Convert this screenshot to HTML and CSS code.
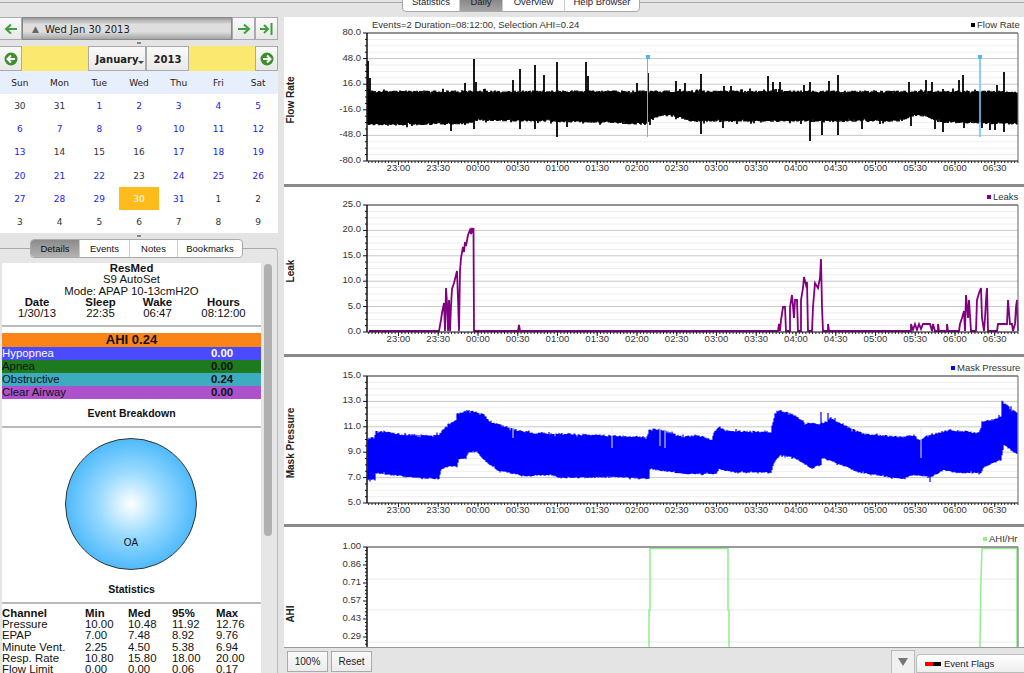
FILE: index.html
```html
<!DOCTYPE html>
<html lang="en">
<head>
  <meta charset="UTF-8">
  <meta name="viewport" content="width=device-width, initial-scale=1.0">
  <title>SleepyHead</title>
  <link rel="stylesheet" href="styles.css">
</head>
<body>
  <div class="top-bar">
    <div class="top-tabs">
      <div class="top-tab tab-stats">Statistics</div>
      <div class="top-tab tab-daily active">Daily</div>
      <div class="top-tab tab-overview">Overview</div>
      <div class="top-tab tab-help">Help Browser</div>
    </div>
  </div>

  <div class="main">
    <div class="sidebar">
      <div class="date-bar">
        <div class="tool-btn btn-back">
          <svg width="14" height="12" viewBox="0 0 14 12"><path d="M13 6H3M7 1.500 2 6l5 4.500" fill="none" stroke="#3f9e3f" stroke-width="2"/></svg>
        </div>
        <div class="date-title"><span class="date-tri">&#9650;</span>Wed Jan 30 2013</div>
        <div class="tool-btn btn-next">
          <svg width="14" height="12" viewBox="0 0 14 12"><path d="M1 6h10M7 1.500 12 6l-5 4.500" fill="none" stroke="#3f9e3f" stroke-width="2"/></svg>
        </div>
        <div class="tool-btn btn-last">
          <svg width="14" height="12" viewBox="0 0 14 12"><path d="M0 6h7M4 2l4 4-4 4" fill="none" stroke="#3f9e3f" stroke-width="2"/><path d="M11.500 0v12" stroke="#3f9e3f" stroke-width="2"/></svg>
        </div>
      </div>
      <div class="grip-row"><span class="grip"></span></div>

      <div class="cal-nav">
        <div class="tool-btn nav-prev">
          <svg width="14" height="14" viewBox="0 0 14 14"><circle cx="7" cy="7" r="6.500" fill="#3c8f2c"/><path d="M11 7H4M7 3.500 3.500 7 7 10.500" fill="none" stroke="#fff" stroke-width="2"/></svg>
        </div>
        <div class="cal-fill"></div>
        <div class="month-btn">January<span class="month-caret"></span></div>
        <div class="year-btn">2013</div>
        <div class="cal-fill"></div>
        <div class="tool-btn nav-next">
          <svg width="14" height="14" viewBox="0 0 14 14"><circle cx="7" cy="7" r="6.500" fill="#3c8f2c"/><path d="M3 7h7M7 3.500 10.500 7 7 10.500" fill="none" stroke="#fff" stroke-width="2"/></svg>
        </div>
      </div>

      <div class="cal-head">
        <span>Sun</span><span>Mon</span><span>Tue</span><span>Wed</span><span>Thu</span><span>Fri</span><span>Sat</span>
      </div>
      <div class="cal-grid">
        <span>30</span><span>31</span><span class="has-data">1</span><span class="has-data">2</span><span class="has-data">3</span><span class="has-data">4</span><span class="has-data">5</span>
        <span class="has-data">6</span><span class="has-data">7</span><span class="has-data">8</span><span class="has-data">9</span><span class="has-data">10</span><span class="has-data">11</span><span class="has-data">12</span>
        <span class="has-data">13</span><span>14</span><span>15</span><span>16</span><span class="has-data">17</span><span class="has-data">18</span><span class="has-data">19</span>
        <span class="has-data">20</span><span class="has-data">21</span><span class="has-data">22</span><span>23</span><span class="has-data">24</span><span class="has-data">25</span><span class="has-data">26</span>
        <span class="has-data">27</span><span class="has-data">28</span><span class="has-data">29</span><span class="selected">30</span><span class="has-data">31</span><span>1</span><span>2</span>
        <span>3</span><span>4</span><span>5</span><span>6</span><span>7</span><span>8</span><span>9</span>
      </div>
      <div class="grip-row"><span class="grip"></span></div>

      <div class="side-tabs">
        <div class="side-tab tab-details active">Details</div>
        <div class="side-tab tab-events">Events</div>
        <div class="side-tab tab-notes">Notes</div>
        <div class="side-tab tab-bookmarks">Bookmarks</div>
      </div>

      <div class="panel">
        <div class="details">
          <div class="center bold">ResMed</div>
          <div class="center">S9 AutoSet</div>
          <div class="center">Mode: APAP 10-13cmH2O</div>
          <div class="session">
            <div class="bold">Date</div><div class="bold">Sleep</div><div class="bold">Wake</div><div class="bold">Hours</div>
            <div>1/30/13</div><div>22:35</div><div>06:47</div><div>08:12:00</div>
          </div>
          <hr class="rule rule-session">
          <div class="ahi-total">AHI 0.24</div>
          <div class="ahi-row hypopnea"><span>Hypopnea</span><b>0.00</b></div>
          <div class="ahi-row apnea"><span>Apnea</span><b>0.00</b></div>
          <div class="ahi-row obstructive"><span>Obstructive</span><b>0.24</b></div>
          <div class="ahi-row clear"><span>Clear Airway</span><b>0.00</b></div>
          <div class="center bold section-title breakdown">Event Breakdown</div>
          <hr class="rule">
          <div class="pie"><span>OA</span></div>
          <div class="center bold section-title statistics">Statistics</div>
          <hr class="rule">
          <div class="stats">
            <b>Channel</b><b>Min</b><b>Med</b><b>95%</b><b>Max</b>
            <span>Pressure</span><span>10.00</span><span>10.48</span><span>11.92</span><span>12.76</span>
            <span>EPAP</span><span>7.00</span><span>7.48</span><span>8.92</span><span>9.76</span>
            <span>Minute Vent.</span><span>2.25</span><span>4.50</span><span>5.38</span><span>6.94</span>
            <span>Resp. Rate</span><span>10.80</span><span>15.80</span><span>18.00</span><span>20.00</span>
            <span>Flow Limit</span><span>0.00</span><span>0.00</span><span>0.06</span><span>0.17</span>
          </div>
        </div>
        <div class="scrollbar"><div class="scroll-thumb"></div></div>
      </div>
    </div>

    <div class="content">
      <div class="graphs">
        <div class="graph" id="flow"></div>
        <div class="graph" id="leak"></div>
        <div class="graph" id="pressure"></div>
        <div class="graph last" id="ahi"></div>
      </div>
      <div class="bottom-bar">
        <div class="plain-btn">100%</div>
        <div class="plain-btn">Reset</div>
        <div class="spacer"></div>
        <div class="flags-toggle"><span class="flags-tri"></span></div>
        <div class="flags-combo"><span class="flag-red"></span><span class="flag-black"></span>Event Flags</div>
      </div>
    </div>
  </div>

  <script src="app.js"></script>
</body>
</html>
```

FILE: styles.css
```css
html, body {
  height: 100%;
}

body {
  margin: 0;
  overflow: hidden;
  display: flex;
  flex-direction: column;
  font-family: "Liberation Sans", Arial, sans-serif;
  font-size: 11.400px;
  color: #111;
  background: #e4e4e4;
}

.top-bar {
  height: 17px;
  flex: none;
  overflow: hidden;
  padding-left: 402px;
  background: linear-gradient(#e4e4e4 2px, #a8a8a8 2px, #a8a8a8 3px, #e4e4e4 3px);
}

.top-tabs {
  display: flex;
  width: 238px;
  height: 20px;
  margin-top: -8px;
  background: #fff;
  border: 1px solid #aaa;
  border-radius: 4px;
  box-sizing: border-box;
}

.top-tab {
  text-align: center;
  line-height: 18px;
  font-size: 9.500px;
  color: #223;
  border-right: 1px solid #ccc;
  box-sizing: border-box;
}

.top-tab.active {
  background: linear-gradient(#777, #a5a5a5);
}

.tab-stats { width: 57px; }
.tab-daily { width: 43px; }
.tab-overview { width: 62px; }
.tab-help { flex: 1; border-right: 0; }

.main {
  flex: 1;
  display: flex;
  min-height: 0;
}

.sidebar {
  width: 284px;
  flex: none;
  overflow: hidden;
  background: #e4e4e4;
}

.date-bar {
  display: flex;
  width: 278px;
  height: 23px;
}

.tool-btn {
  display: flex;
  align-items: center;
  justify-content: center;
  width: 23px;
  background: linear-gradient(#fafafa, #e8e8e8);
  border: 1px solid #aaa;
  box-sizing: border-box;
}

.btn-back { margin-left: -1px; }

.date-title {
  flex: 1;
  display: flex;
  align-items: center;
  padding-top: 1px;
  font-family: "DejaVu Sans", sans-serif;
  font-size: 10px;
  color: #222;
  background: linear-gradient(#9a9a9a, #dedede 30%, #dedede 65%, #a5a5a5);
  border: 1px solid #888;
  box-sizing: border-box;
}

.date-tri {
  margin: 0 6px 0 9px;
  font-size: 9px;
  color: #666;
}

.grip-row {
  height: 6px;
  width: 278px;
  display: flex;
  justify-content: center;
  align-items: center;
}

.grip {
  width: 4px;
  height: 2px;
  background: #888;
}

.cal-nav {
  display: flex;
  width: 278px;
  height: 25px;
}

.nav-prev { margin-left: -1px; }

.cal-fill {
  flex: 1;
  background: #fbe96f;
}

.month-btn, .year-btn {
  position: relative;
  display: flex;
  align-items: center;
  justify-content: center;
  height: 25px;
  padding-top: 1px;
  font-family: "DejaVu Sans", sans-serif;
  font-size: 10px;
  font-weight: bold;
  color: #222;
  background: linear-gradient(#fafafa, #e9e9e9);
  border: 1px solid #aaa;
  box-sizing: border-box;
}

.month-btn { width: 58px; }
.year-btn { width: 43px; }

.month-caret {
  position: absolute;
  right: 1px;
  bottom: 6px;
  border-left: 3px solid transparent;
  border-right: 3px solid transparent;
  border-top: 3px solid #444;
}

.cal-head, .cal-grid {
  display: grid;
  grid-template-columns: repeat(7, 1fr);
  width: 278px;
  font-family: "DejaVu Sans", sans-serif;
  font-size: 9px;
  text-align: center;
}

.cal-head {
  height: 23px;
  line-height: 24px;
  background: #e8effc;
  color: #222;
}

.cal-grid {
  grid-auto-rows: 23.200px;
  line-height: 24px;
  background: #fff;
  color: #333;
}

.cal-grid .has-data {
  color: #2222f0;
}

.cal-grid .selected {
  background: #fdbc1c;
  color: #fff;
}

.side-tabs {
  position: relative;
  z-index: 1;
  display: flex;
  width: 213px;
  height: 19px;
  margin-left: 30px;
  margin-bottom: -10px;
  background: #fff;
  border: 1px solid #aaa;
  border-radius: 4px;
  box-sizing: border-box;
  font-size: 9.500px;
  line-height: 17px;
  text-align: center;
}

.side-tab {
  border-right: 1px solid #ccc;
  box-sizing: border-box;
}

.side-tab.active {
  background: linear-gradient(#8a8a8a, #b4b4b4);
  border-radius: 3px 0 0 3px;
}

.tab-details { width: 49px; }
.tab-events { width: 50px; }
.tab-notes { width: 48px; }
.tab-bookmarks { flex: 1; border-right: 0; }

.panel {
  display: flex;
  width: 278px;
  height: 430px;
  padding: 14px 2px 0 2px;
  background: #e6e6e6;
  border-top: 1px solid #aaa;
  border-right: 1px solid #bbb;
  border-radius: 0 4px 0 0;
  box-sizing: border-box;
}

.details {
  width: 259px;
  flex: none;
  background: #fff;
  line-height: 11.200px;
  overflow: hidden;
}

.center { text-align: center; }
.bold { font-weight: bold; }

.session {
  display: grid;
  grid-template-columns: 70px 57px 57px 1fr;
  text-align: center;
}

.rule {
  height: 2px;
  margin: 0;
  border: 0;
  background: #bbb;
}

.rule-session {
  margin-top: 6px;
  margin-bottom: 6px;
}

.ahi-total {
  height: 13.500px;
  line-height: 14px;
  background: #fb8417;
  text-align: center;
  font-size: 13px;
  font-weight: bold;
}

.ahi-row {
  display: flex;
  height: 13px;
  line-height: 13px;
}

.ahi-row span { width: 209px; }
.hypopnea { background: #4a4aff; color: #fff; }
.apnea { background: #1e7a1e; }
.obstructive { background: #3eacc0; }
.clear { background: #ad52cc; }

.section-title {
  font-size: 10.500px;
}

.breakdown {
  margin-top: 9px;
  margin-bottom: 7px;
}

.pie {
  width: 132px;
  height: 132px;
  margin: 10px 0 0 63px;
  display: flex;
  align-items: flex-end;
  justify-content: center;
  background: radial-gradient(circle at 50% 50%, #fff 0, #9adbff 35%, #4db9fb 72%, #38aef5 100%);
  border: 1px solid #333;
  border-radius: 50%;
  box-sizing: border-box;
  font-size: 10px;
}

.pie span {
  margin-bottom: 21px;
}

.statistics {
  margin-top: 14px;
  margin-bottom: 7px;
}

.stats {
  display: grid;
  grid-template-columns: 83px 43px 44px 44px 1fr;
  margin-top: 4px;
}

.scrollbar {
  flex: 1;
  padding: 1px 3px 0 3px;
}

.scroll-thumb {
  width: 8px;
  height: 272px;
  background: #b0b0b0;
  border-radius: 4px;
}

.content {
  flex: 1;
  display: flex;
  flex-direction: column;
  min-width: 0;
}

.graphs {
  flex: 1;
  display: flex;
  flex-direction: column;
  min-height: 0;
  background: #fff;
}

.graph {
  height: 167px;
  flex: none;
  border-bottom: 3px solid #8a8a8a;
}

.graph.last {
  height: 120px;
  border-bottom: 0;
}

.graph svg {
  display: block;
}

.graph text {
  font-family: "Liberation Sans", Arial, sans-serif;
  font-size: 9.500px;
  fill: #333;
}

.graph .axis-title {
  font-size: 10px;
  font-weight: bold;
  fill: #222;
}

.bottom-bar {
  display: flex;
  align-items: flex-end;
  height: 26px;
  flex: none;
  padding-left: 3px;
  gap: 3px;
  background: #e4e4e4;
  border-top: 1px solid #999;
  box-sizing: border-box;
}

.plain-btn {
  width: 41px;
  height: 21px;
  margin-bottom: 1px;
  line-height: 20px;
  text-align: center;
  font-size: 10px;
  color: #222;
  background: linear-gradient(#fafafa, #ececec);
  border: 1px solid #aaa;
  box-sizing: border-box;
}

.spacer { flex: 1; }

.flags-toggle {
  display: flex;
  align-items: center;
  justify-content: center;
  width: 24px;
  height: 23px;
  background: #f0f0f0;
  border: 1px solid #bbb;
  border-bottom: 0;
  box-sizing: border-box;
}

.flags-tri {
  border-left: 5px solid transparent;
  border-right: 5px solid transparent;
  border-top: 8px solid #777;
}

.flags-combo {
  display: flex;
  align-items: center;
  width: 115px;
  height: 19px;
  margin-left: -2px;
  margin-right: -7px;
  padding-left: 8px;
  font-size: 9.500px;
  color: #223;
  background: linear-gradient(#fff, #eee);
  border: 1px solid #bbb;
  border-radius: 4px 0 0 0;
  box-sizing: border-box;
}

.flag-red, .flag-black {
  width: 8px;
  height: 4px;
}

.flag-red { background: #f00; }
.flag-black { background: #000; margin-right: 3px; }
```

FILE: app.js
```js
const NS = 'http://www.w3.org/2000/svg';
const TIMES = ['23:00', '23:30', '00:00', '00:30', '01:00', '01:30', '02:00', '02:30',
  '03:00', '03:30', '04:00', '04:30', '05:00', '05:30', '06:00', '06:30'];
const LEFT = 367;
const RIGHT = 1018;

let seed = 12345;
function rnd() {
  seed = (seed * 16807) % 2147483647;
  return seed / 2147483647;
}

function el(parent, name, attrs, text) {
  const node = document.createElementNS(NS, name);
  for (const key in attrs) node.setAttribute(key, attrs[key]);
  if (text) node.textContent = text;
  parent.appendChild(node);
  return node;
}

function line(svg, x1, y1, x2, y2, color, width) {
  el(svg, 'line', { x1, y1, x2, y2, stroke: color, 'stroke-width': width || 1 });
}

// envelope values between known points
function interp(points, x) {
  for (let i = 1; i < points.length; i++) {
    if (x <= points[i][0]) {
      const a = points[i - 1];
      const b = points[i];
      return a[1] + (b[1] - a[1]) * (x - a[0]) / (b[0] - a[0]);
    }
  }
  return points[points.length - 1][1];
}

// small noise with a few bigger outliers, for the signal edges
function jag(size) {
  const r = rnd();
  if (r < 0.12) return (rnd() - 0.5) * size * 3;
  return (rnd() - 0.5) * size;
}

function frame(id, opts) {
  const svg = el(document.getElementById(id), 'svg', {
    width: 740, height: opts.height,
    viewBox: `284 ${opts.y} 740 ${opts.height}`
  });

  const step = (opts.bottom - opts.top) / (opts.labels.length - 1);
  const bottomEdge = opts.noXAxis ? 647 : opts.bottom;

  // grid
  if (opts.grid) {
    opts.grid.forEach(y => line(svg, LEFT, y, RIGHT, y, '#e8e8e8'));
  } else {
    opts.labels.forEach((label, i) => {
      const y = opts.top + i * step;
      line(svg, LEFT, y, RIGHT, y, '#c8c8c8');
      if (i < opts.labels.length - 1) {
        for (let m = 1; m < 4; m++) {
          line(svg, LEFT, y + m * step / 4, RIGHT, y + m * step / 4, '#eeeeee');
        }
      }
    });
  }

  // y axis labels and ticks
  const minor = opts.minor || 4;
  opts.labels.forEach((label, i) => {
    const y = opts.top + i * step;
    if (y <= bottomEdge) {
      line(svg, LEFT - 4, y, LEFT, y, '#111');
      el(svg, 'text', { x: 361, y: y + 2, 'text-anchor': 'end' }, label);
    }
    for (let m = 1; m < minor; m++) {
      const my = y + m * step / minor;
      if (my < bottomEdge) line(svg, LEFT - 2, my, LEFT, my, '#111');
    }
  });

  // axis title
  el(svg, 'text', {
    class: 'axis-title', 'text-anchor': 'middle',
    transform: `translate(294 ${opts.titleY}) rotate(-90)`
  }, opts.title);

  // legend
  el(svg, 'rect', { x: opts.legendX, y: opts.legendY - 2, width: 4, height: 4, fill: opts.color });
  el(svg, 'text', { x: opts.legendX + 6, y: opts.legendY + 3 }, opts.legend);

  svg.plot = el(svg, 'g', {});

  // plot border
  line(svg, LEFT, opts.top, RIGHT, opts.top, '#777', 1.5);
  line(svg, RIGHT, opts.top, RIGHT, bottomEdge, '#666');
  line(svg, LEFT, opts.top, LEFT, bottomEdge, '#111', 1.5);

  // time axis
  if (!opts.noXAxis) {
    line(svg, LEFT, opts.bottom, RIGHT, opts.bottom, '#222');
    for (let x = 398.5 - 3.3125 * 9; x < RIGHT; x += 3.3125) {
      line(svg, x, opts.bottom, x, opts.bottom + 2, '#222');
    }
    TIMES.forEach((time, i) => {
      const x = 398.5 + i * 39.75;
      line(svg, x, opts.bottom, x, opts.bottom + 4, '#222');
      el(svg, 'text', { x, y: opts.bottom + 10, 'text-anchor': 'middle' }, time);
    });
  }
  return svg;
}

function drawFlow() {
  const svg = frame('flow', {
    y: 17, height: 167, top: 33, bottom: 161,
    labels: ['80.0', '48.0', '16.0', '-16.0', '-48.0', '-80.0'],
    title: 'Flow Rate', titleY: 100, color: '#000',
    legend: 'Flow Rate', legendX: 971, legendY: 25
  });
  el(svg, 'text', { x: 372, y: 28 }, 'Events=2 Duration=08:12:00, Selection AHI=0.24');

  const lower = [[367, 125], [455, 124], [470, 123], [478, 120], [600, 122], [645, 124],
    [652, 118], [662, 115], [675, 116], [690, 121], [900, 121], [915, 115], [925, 116], [940, 122], [1018, 124]];
  let body = '';
  for (let x = 368; x < RIGHT; x += 1) {
    const top = 91.500 + jag(2);
    const bot = interp(lower, x) + jag(2);
    body += `M${x} ${top.toFixed(1)}V${bot.toFixed(1)}`;
  }
  const ups = [[368, 61], [370, 78], [465, 83], [474, 59], [476, 82], [513, 80], [520, 69], [535, 65],
    [544, 75], [557, 62], [586, 62], [588, 76], [637, 83], [648, 73], [676, 81], [685, 83], [701, 74],
    [724, 86], [731, 86], [768, 76], [773, 82], [780, 82], [804, 85], [810, 82], [829, 81], [838, 75],
    [909, 82], [926, 80], [932, 82], [959, 80], [963, 75], [997, 85], [1004, 72]];
  const downs = [[451, 131], [474, 129], [520, 129], [535, 129], [557, 137], [567, 127], [650, 125],
    [701, 134], [723, 128], [810, 141], [822, 135], [838, 135], [862, 129], [911, 126], [935, 129],
    [943, 132], [964, 128], [982, 128], [990, 130], [995, 130], [1004, 132]];
  ups.forEach(s => { body += `M${s[0]} 95V${s[1]}`; });
  downs.forEach(s => { body += `M${s[0]} 110V${s[1]}`; });
  el(svg.plot, 'path', { d: body, stroke: '#000', 'stroke-width': 1.8, fill: 'none' });

  line(svg.plot, 647.5, 57, 647.5, 137, '#5bb8f0');
  el(svg.plot, 'rect', { x: 646, y: 55, width: 4, height: 4, fill: '#4db6f5' });
  line(svg.plot, 980, 57, 980, 137, 'rgba(110,195,250,0.8)', 2);
  el(svg.plot, 'rect', { x: 978, y: 55, width: 4, height: 4, fill: '#4db6f5' });
}

function drawLeak() {
  const svg = frame('leak', {
    y: 187, height: 167, top: 205, bottom: 332,
    labels: ['25.0', '20.0', '15.0', '10.0', '5.0', '0.0'],
    title: 'Leak', titleY: 271, color: '#800080',
    legend: 'Leaks', legendX: 987, legendY: 197
  });
  const pts = [[369, 331], [439, 331], [441, 320], [442, 313], [444, 303], [445, 331], [446, 288],
    [447, 303], [448, 331], [449, 300], [450, 331], [451, 306], [452, 289], [454, 283], [457, 271],
    [458, 299], [459, 331], [460, 271], [461, 258], [463, 247], [464, 252], [465, 242], [466, 246],
    [468, 235], [470, 230], [471, 234], [472, 228], [473, 233], [473.5, 228], [474, 331], [518, 331],
    [519, 325], [520, 331], [778, 331],
    [779, 324], [780, 331], [781, 320], [783, 307], [785, 307], [786, 331], [790, 331], [790, 307],
    [792, 295], [794, 318], [795, 300], [797, 300], [798, 331], [801, 331], [801, 300], [803, 288],
    [804, 277], [806, 285], [807, 282], [808, 331], [812, 331], [813, 307], [815, 283], [818, 288],
    [820, 278], [821, 259], [822, 307], [823, 331], [828, 331], [828, 324], [829, 331], [911, 331],
    [911, 324], [913, 330], [915, 324], [917, 330], [919, 324], [921, 329], [923, 324], [930, 324],
    [932, 331], [933, 324], [935, 331], [938, 331], [938, 324], [939, 331], [947, 331], [947, 324],
    [948, 331], [959, 331], [960, 324], [962, 318], [964, 311], [965, 331], [966, 295], [968, 318],
    [969, 300], [971, 331], [976, 331], [977, 300], [979, 293], [981, 288], [982, 318], [984, 331],
    [985, 318], [986, 300], [987, 288], [988, 331], [997, 331], [998, 324], [1007, 324], [1008, 300],
    [1010, 324], [1012, 324], [1013, 331], [1015, 324], [1016, 307], [1017, 300], [1018, 331]];
  el(svg.plot, 'polyline', {
    points: pts.map(p => p.join(',')).join(' '),
    fill: 'none', stroke: '#800080', 'stroke-width': 1.8
  });
}

function drawPressure() {
  const svg = frame('pressure', {
    y: 357, height: 167, top: 376, bottom: 503,
    labels: ['15.0', '13.0', '11.0', '9.0', '7.0', '5.0'],
    title: 'Mask Pressure', titleY: 443, color: '#0000ff',
    legend: 'Mask Pressure', legendX: 951, legendY: 368
  });
  const upper = [[367, 438], [374, 438], [376, 431], [407, 435], [439, 435], [447, 425], [456, 421],
    [457, 414], [469, 410], [484, 414], [489, 421], [504, 426], [514, 430], [534, 433], [567, 434],
    [647, 437], [649, 430], [654, 428], [684, 437], [697, 435], [712, 440], [714, 432], [719, 427],
    [727, 431], [771, 432], [772, 425], [775, 414], [780, 410], [794, 415], [806, 423], [821, 424],
    [831, 418], [841, 424], [864, 434], [901, 437], [914, 435], [919, 440], [931, 434], [951, 430],
    [979, 433], [982, 422], [991, 420], [1001, 417], [1002, 400], [1009, 407], [1018, 413]];
  const lower = [[367, 480], [375, 480], [376, 473], [407, 477], [439, 479], [441, 470], [449, 466],
    [457, 467], [459, 459], [466, 458], [469, 452], [477, 452], [484, 460], [497, 470], [511, 473],
    [524, 476], [551, 475], [561, 478], [617, 477], [649, 479], [650, 469], [684, 474], [716, 474],
    [719, 469], [737, 473], [756, 472], [771, 473], [774, 463], [780, 455], [794, 458], [811, 468],
    [821, 465], [822, 458], [847, 467], [857, 472], [901, 479], [914, 475], [931, 477], [944, 470],
    [957, 473], [981, 473], [984, 467], [1001, 460], [1004, 445], [1018, 455]];
  let body = '';
  for (let x = 368; x < RIGHT; x += 1) {
    const top = interp(upper, x) + jag(1.8);
    const bot = interp(lower, x) + jag(1.2);
    body += `M${x} ${top.toFixed(1)}V${bot.toFixed(1)}`;
  }
  body += 'M821 430V412M828 430V413M930 470V482';
  el(svg.plot, 'path', { d: body, stroke: '#0000ff', 'stroke-width': 1.2, fill: 'none' });
  // thin notches in the upper edge
  [[513, 438], [612, 448], [660, 446], [665, 448], [921, 458]].forEach(n => {
    line(svg.plot, n[0], 428, n[0], n[1], '#e8e8ff');
  });
}

function drawAhi() {
  const svg = frame('ahi', {
    y: 527, height: 120, top: 547, bottom: 655, noXAxis: true, minor: 5,
    labels: ['1.00', '0.86', '0.71', '0.57', '0.43', '0.29', '0.14'],
    grid: [579, 610, 642],
    title: 'AHI', titleY: 614, color: '#90ee90',
    legend: 'AHI/Hr', legendX: 983, legendY: 539
  });
  const pts = [[649, 647], [649, 610], [650, 610], [650, 548.5], [728, 548.5], [728, 610], [729, 610], [729, 647]];
  const pts2 = [[980, 647], [980.5, 610], [981, 579], [982, 548.5], [1017, 548.5], [1017, 647]];
  [pts, pts2].forEach(p => {
    el(svg.plot, 'polyline', {
      points: p.map(q => q.join(',')).join(' '),
      fill: 'none', stroke: '#90ee90', 'stroke-width': 1.5
    });
  });
}

drawFlow();
drawLeak();
drawPressure();
drawAhi();
```
